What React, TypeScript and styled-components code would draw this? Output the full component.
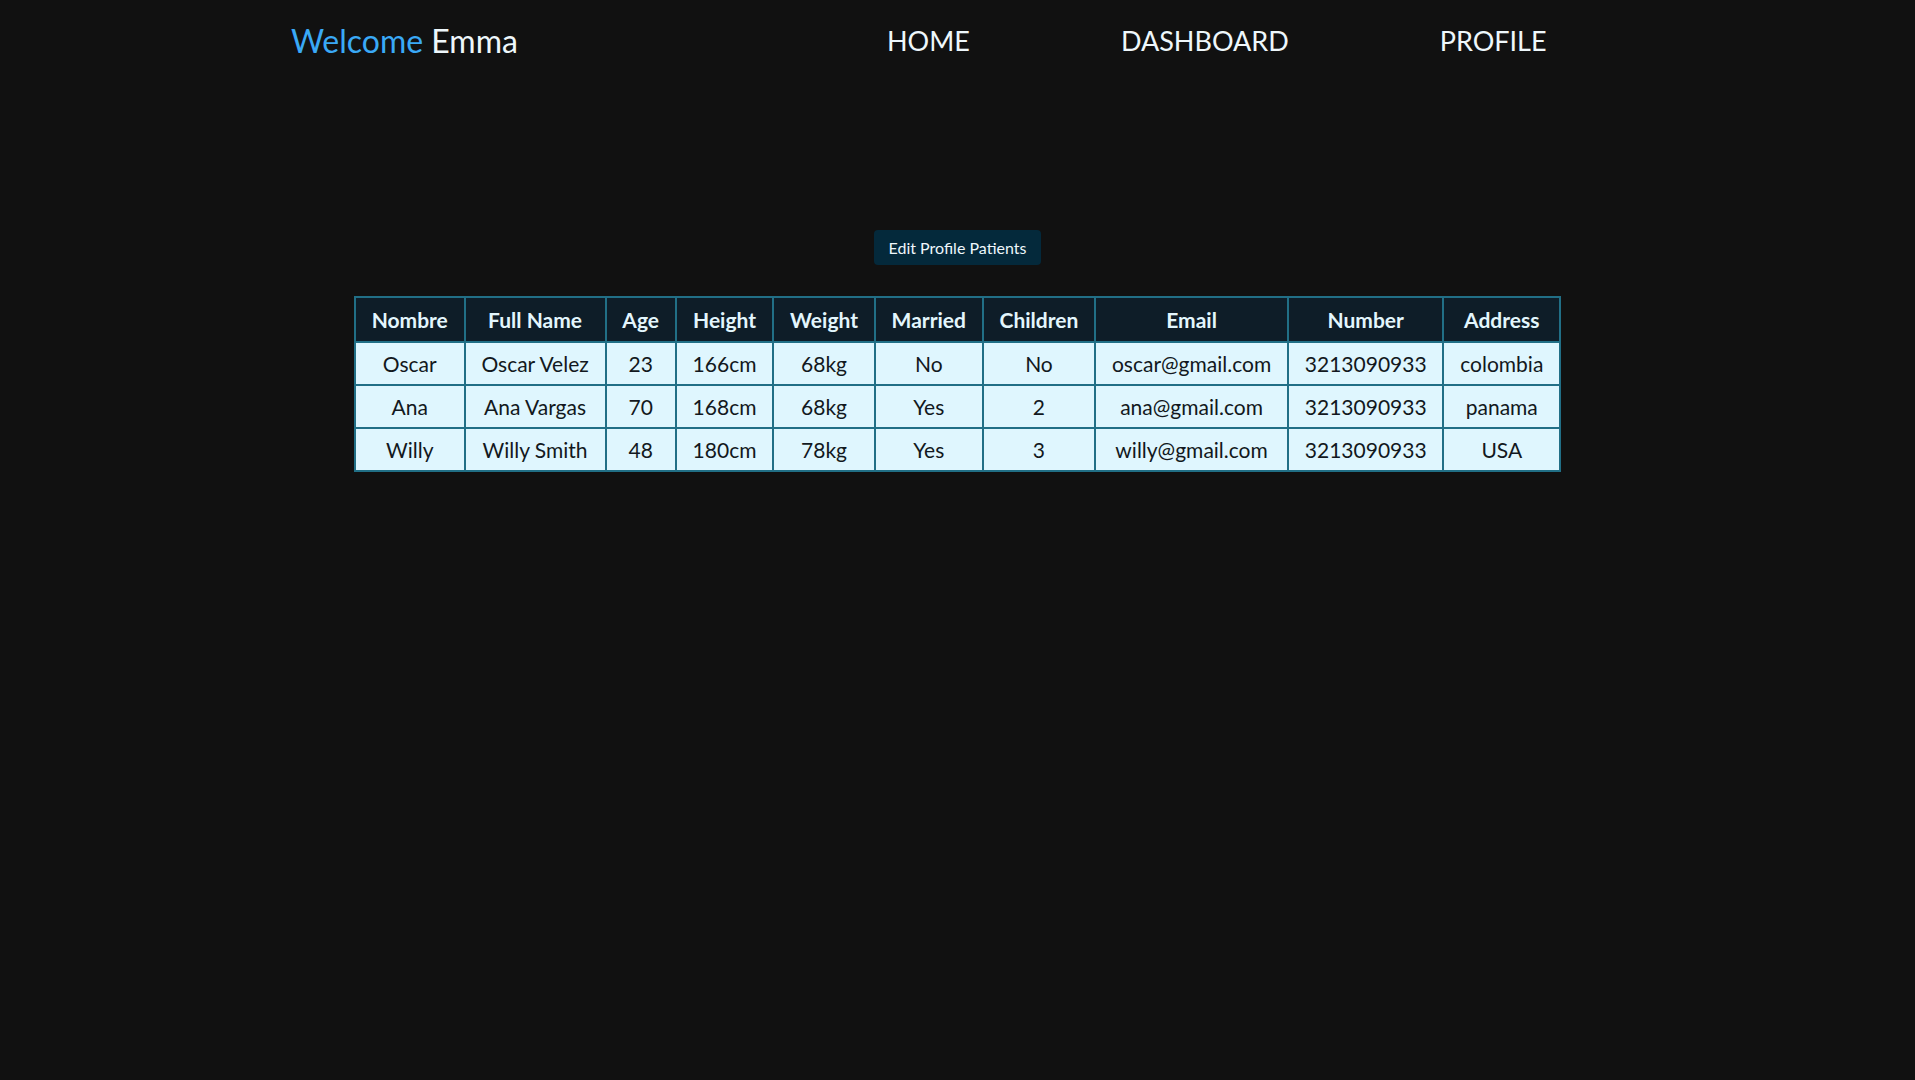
import React from 'react'
import styled, { createGlobalStyle } from 'styled-components'

const GlobalStyle = createGlobalStyle`
  html, body {
    margin: 0;
    padding: 0;
    background: #111111;
    font-family: Lato, 'Open Sans', sans-serif;
    min-height: 100vh;
  }
`

const Header = styled.header`
  display: flex;
  align-items: center;
  height: 81px;
  padding-left: 291px;
`

const Brand = styled.h1`
  width: 596px;
  margin: 0;
  font-size: 32px;
  font-weight: 400;
  color: #eef7fb;

  span {
    color: #3aa9f6;
  }
`

const NavList = styled.nav`
  display: flex;
  gap: 151px;
`

const NavItem = styled.a`
  font-size: 27px;
  color: #eef7fb;
  text-decoration: none;
  text-transform: uppercase;
  cursor: pointer;
`

const Main = styled.main`
  display: flex;
  flex-direction: column;
  align-items: center;
  padding-top: 149px;
`

const EditButton = styled.button`
  height: 35px;
  padding: 0 15px;
  border: none;
  border-radius: 4px;
  background: #04293b;
  color: #eef7fb;
  font-family: Lato, sans-serif;
  font-size: 16px;
  cursor: pointer;
`

const Table = styled.table`
  margin-top: 31px;
  border-collapse: collapse;
  border: 2px solid #216f86;
`

const Th = styled.th`
  padding: 9px 15.8px;
  border: 2px solid #216f86;
  background: #0e1d28;
  color: #e3f6fd;
  font-size: 21px;
  font-weight: 700;
`

const Td = styled.td`
  padding: 8px 15.8px;
  border: 2px solid #216f86;
  background: #dff6fe;
  color: #121820;
  font-size: 21px;
  text-align: center;
`

const columns = ['Nombre', 'Full Name', 'Age', 'Height', 'Weight', 'Married', 'Children', 'Email', 'Number', 'Address']

const patients = [
  ['Oscar', 'Oscar Velez', '23', '166cm', '68kg', 'No', 'No', 'oscar@gmail.com', '3213090933', 'colombia'],
  ['Ana', 'Ana Vargas', '70', '168cm', '68kg', 'Yes', '2', 'ana@gmail.com', '3213090933', 'panama'],
  ['Willy', 'Willy Smith', '48', '180cm', '78kg', 'Yes', '3', 'willy@gmail.com', '3213090933', 'USA'],
]

const App: React.FC = () => {
  return (
    <>
      <GlobalStyle />
      <Header>
        <Brand>
          <span>Welcome</span> Emma
        </Brand>
        <NavList>
          <NavItem>Home</NavItem>
          <NavItem>Dashboard</NavItem>
          <NavItem>Profile</NavItem>
        </NavList>
      </Header>
      <Main>
        <EditButton>Edit Profile Patients</EditButton>
        <Table>
          <thead>
            <tr>
              {columns.map((c) => (
                <Th key={c}>{c}</Th>
              ))}
            </tr>
          </thead>
          <tbody>
            {patients.map((row) => (
              <tr key={row[0]}>
                {row.map((cell, i) => (
                  <Td key={i}>{cell}</Td>
                ))}
              </tr>
            ))}
          </tbody>
        </Table>
      </Main>
    </>
  )
}

export default App
